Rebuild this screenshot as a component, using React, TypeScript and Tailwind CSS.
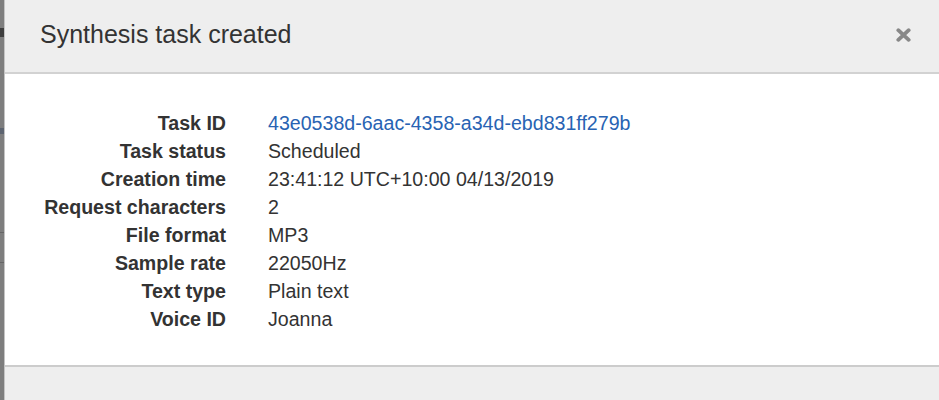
import React from "react";

const rows: { label: string; value: string; link?: boolean }[] = [
  { label: "Task ID", value: "43e0538d-6aac-4358-a34d-ebd831ff279b", link: true },
  { label: "Task status", value: "Scheduled" },
  { label: "Creation time", value: "23:41:12 UTC+10:00 04/13/2019" },
  { label: "Request characters", value: "2" },
  { label: "File format", value: "MP3" },
  { label: "Sample rate", value: "22050Hz" },
  { label: "Text type", value: "Plain text" },
  { label: "Voice ID", value: "Joanna" },
];

export default function App() {
  return (
    <div
      className="flex w-[939px] h-[400px] overflow-hidden bg-white text-[#333333]"
      style={{ fontFamily: '"Liberation Sans", Arial, Helvetica, sans-serif' }}
    >
      {/* page behind overlay */}
      <div className="flex flex-col w-[4px] shrink-0 bg-[#7e7e7e]">
        <div className="h-[28px]" />
        <div className="h-[9px] bg-[#3e3e3e]" />
        <div className="h-[91px]" />
        <div className="h-[6px] bg-[#5d6470]" />
        <div className="h-[98px]" />
        <div className="h-[1px] bg-[#666666]" />
        <div className="h-[29px]" />
        <div className="h-[1px] bg-[#666666]" />
      </div>

      {/* modal */}
      <div className="flex flex-col flex-1 border-l border-[#c4c4c4]">
        <div className="flex items-center justify-between h-[74px] shrink-0 bg-[#eeeeee] border-b-2 border-[#d2d2d2] pl-[35px] pr-[28px] pb-[5px]">
          <h4 className="text-[25px] leading-[36px] font-normal text-[#333333]">
            Synthesis task created
          </h4>
          <svg width="15" height="14" viewBox="0 0 15 14" className="mt-[2px]">
            <path
              d="M2.3 2.2 L12.7 11.8 M12.7 2.2 L2.3 11.8"
              stroke="#888888"
              strokeWidth="3.8"
              strokeLinecap="round"
            />
          </svg>
        </div>

        <div className="flex-1 bg-white pt-[35px]">
          <div className="grid grid-cols-[221px_1fr] gap-x-[42px] text-[19.6px] leading-[28px]">
            {rows.map((r) => (
              <React.Fragment key={r.label}>
                <div className="text-right font-bold text-[#333333] whitespace-nowrap">
                  {r.label}
                </div>
                <div
                  className={
                    r.link
                      ? "text-[#2863b3] whitespace-nowrap"
                      : "text-[#333333] whitespace-nowrap"
                  }
                >
                  {r.value}
                </div>
              </React.Fragment>
            ))}
          </div>
        </div>

        <div className="h-[35px] shrink-0 bg-[#eeeeee] border-t-2 border-[#cccccc]" />
      </div>
    </div>
  );
}
